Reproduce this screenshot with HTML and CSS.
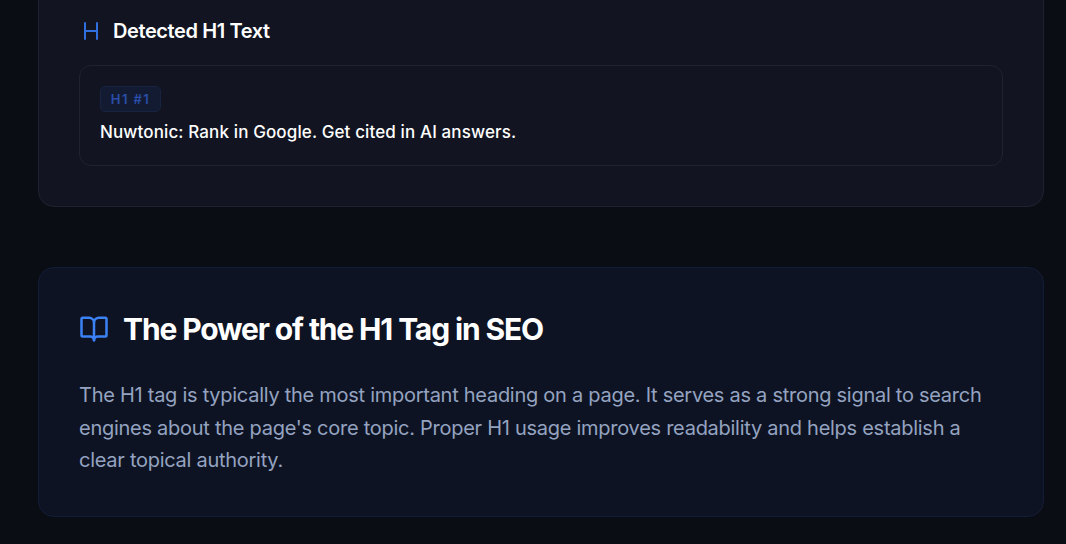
FILE: index.html
```html
<!DOCTYPE html>
<html lang="en">
<head>
  <meta charset="UTF-8">
  <meta name="viewport" content="width=device-width, initial-scale=1.0">
  <title>H1 Tag Checker</title>
  <link rel="stylesheet" href="styles.css">
</head>
<body>
  <main class="page">
    <section class="card results">
      <h3 class="results-title">
        <svg class="icon-h" viewBox="0 0 24 24" fill="none" stroke="currentColor" stroke-width="2" stroke-linecap="round" stroke-linejoin="round"><path d="M6 12h12"/><path d="M6 20V4"/><path d="M18 20V4"/></svg>
        Detected H1 Text
      </h3>
      <div class="h1-item">
        <span class="badge">H1 #1</span>
        <p class="h1-text">Nuwtonic: Rank in Google. Get cited in AI answers.</p>
      </div>
    </section>

    <section class="card info">
      <h2 class="info-title">
        <svg class="icon-book" viewBox="0 0 24 24" fill="none" stroke="currentColor" stroke-width="2" stroke-linecap="round" stroke-linejoin="round"><path d="M12 7v14"/><path d="M3 18a1 1 0 0 1-1-1V4a1 1 0 0 1 1-1h5a4 4 0 0 1 4 4 4 4 0 0 1 4-4h5a1 1 0 0 1 1 1v13a1 1 0 0 1-1 1h-6a3 3 0 0 0-3 3 3 3 0 0 0-3-3z"/></svg>
        The Power of the H1 Tag in SEO
      </h2>
      <p class="info-text">The H1 tag is typically the most important heading on a page. It serves as a strong signal to search engines about the page's core topic. Proper H1 usage improves readability and helps establish a clear topical authority.</p>
    </section>
  </main>
</body>
</html>
```
FILE: styles.css
```css
* {
  box-sizing: border-box;
}

html, body {
  height: 544px;
  overflow: hidden;
}

body {
  margin: 0;
  background-color: #0b0d14;
  font-family: "Inter", "Liberation Sans", sans-serif;
  color: #fff;
}

.page {
  width: 1006px;
  margin: -40px 0 0 38px;
  display: flex;
  flex-direction: column;
  gap: 60px;
}

.card {
  border-radius: 16px;
  border: 1px solid #1f2230;
  padding: 40px;
}

.results {
  background-color: #121521;
  height: 247px;
  padding-top: 55px;
}

.results-title {
  display: flex;
  align-items: center;
  gap: 10px;
  margin: 0 0 19px 0;
  height: 30px;
  font-size: 20px;
  font-weight: 600;
  letter-spacing: -0.4px;
}

.icon-h {
  width: 24px;
  height: 24px;
  color: #2f6fe0;
}

.h1-item {
  height: 101px;
  padding: 20px;
  background-color: #121521;
  border: 1px solid #1f2230;
  border-radius: 12px;
}

.badge {
  display: block;
  width: 61px;
  height: 26px;
  line-height: 24px;
  text-align: center;
  font-size: 13px;
  font-weight: 600;
  letter-spacing: 1.4px;
  color: #2a4ea8;
  background-color: #131b33;
  border: 1px solid #18233f;
  border-radius: 5px;
}

.h1-text {
  margin: 7px 0 0 0;
  font-size: 17px;
  font-weight: 500;
  line-height: 26px;
  letter-spacing: 0.12px;
}

.info {
  background-color: #0e1323;
  border-color: #141d38;
  height: 250px;
}

.info-title {
  display: flex;
  align-items: center;
  gap: 14px;
  margin: 0 0 29px 0;
  height: 42px;
  font-size: 30px;
  font-weight: 700;
  letter-spacing: -1.13px;
}

.icon-book {
  width: 30px;
  height: 30px;
  color: #3b82f6;
}

.info-text {
  margin: 0;
  font-size: 20px;
  line-height: 32.5px;
  letter-spacing: -0.27px;
  color: #94a3c0;
}
```
